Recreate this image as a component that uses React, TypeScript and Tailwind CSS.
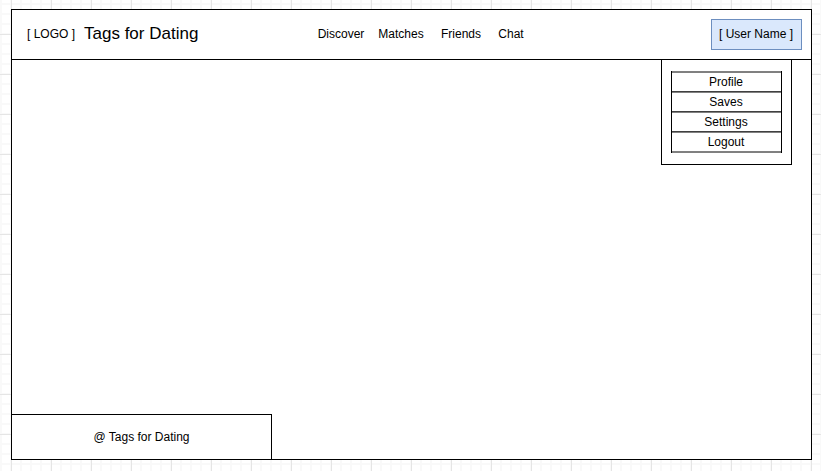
import React from "react";

const links = [
  { label: "Discover", width: "w-[60px]" },
  { label: "Matches", width: "w-[60px]" },
  { label: "Friends", width: "w-[60px]" },
  { label: "Chat", width: "w-10" },
];

const menuItems = ["Profile", "Saves", "Settings", "Logout"];

// Drawing-board grid: faint lines every 10px, stronger ones every 40px.
function GridBackground({ children }: { children: React.ReactNode }) {
  return (
    <div className="bg-white bg-[linear-gradient(to_right,#e5e5e5_1px,transparent_1px),linear-gradient(to_bottom,#e5e5e5_1px,transparent_1px),linear-gradient(to_right,#f9f9f9_2px,transparent_2px),linear-gradient(to_bottom,#f9f9f9_2px,transparent_2px)] bg-[size:40px_40px,40px_40px,10px_10px,10px_10px] bg-[position:11px_0px,0px_34px,0px_0px,0px_3px]">
      {children}
    </div>
  );
}

function Header() {
  return (
    <header className="relative flex h-[50px] items-center border-b border-black">
      <div className="flex w-[299px] items-center gap-[9px] pb-0.5 pl-[15px]">
        <span>[ LOGO ]</span>
        <h1 className="text-[17px] leading-5">Tags for Dating</h1>
      </div>
      <nav className="flex pb-0.5">
        {links.map((link) => (
          <a key={link.label} href="#" className={`text-center ${link.width}`}>
            {link.label}
          </a>
        ))}
      </nav>
      <button
        type="button"
        className="mr-[9px] ml-auto h-[31px] w-[91px] border border-[#6c8ebf] bg-[#dae8fc] pr-px pb-0.5"
      >
        [ User Name ]
      </button>
      <div className="absolute top-full right-[19px] h-[106px] w-[131px] border border-black bg-white px-[9px] pt-[11px]">
        <ul className="border-x border-black">
          {menuItems.map((item) => (
            <li
              key={item}
              className="border-t border-b border-t-[#808080] border-b-[#404040] first:border-t-2 last:border-b-2 last:border-b-[#808080]"
            >
              <button type="button" className="block h-[18px] w-full pr-px text-center">
                {item}
              </button>
            </li>
          ))}
        </ul>
      </div>
    </header>
  );
}

export default function App() {
  return (
    <GridBackground>
      <div className="flex min-h-screen flex-col pt-[9px] pr-[9px] pb-[11px] pl-[11px] font-['Liberation_Sans',Arial,sans-serif] text-[12px] leading-4 text-black">
        <div className="flex grow flex-col border border-black bg-white">
          <Header />
          <main className="grow" />
          <footer className="flex h-[45px] w-[260px] items-center justify-center border-t border-r border-black">
            @ Tags for Dating
          </footer>
        </div>
      </div>
    </GridBackground>
  );
}
